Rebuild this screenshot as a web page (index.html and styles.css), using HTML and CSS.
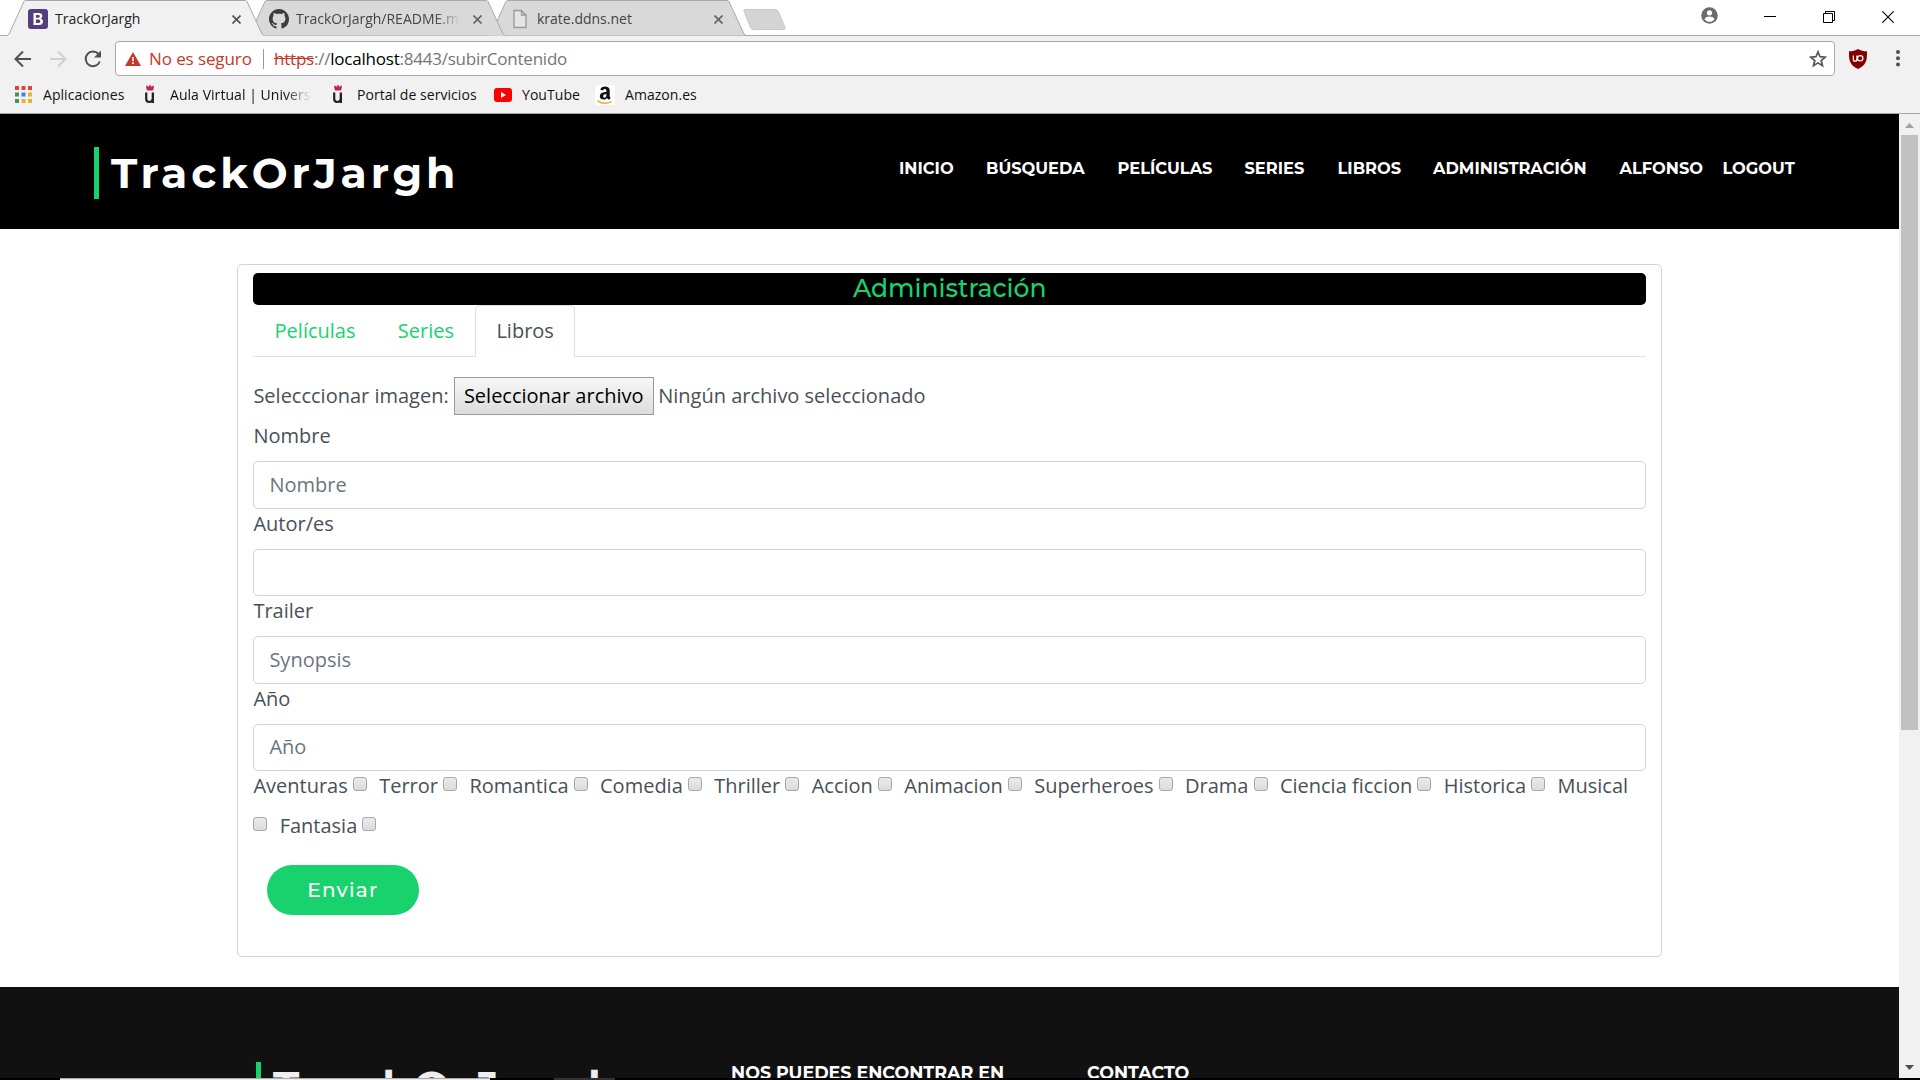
FILE: index.html
```html
<!DOCTYPE html>
<html lang="es">
<head>
<meta charset="utf-8">
<title>TrackOrJargh</title>
<link rel="stylesheet" href="styles.css">
</head>
<body>
<div class="browser">
  <div class="tabstrip">
    <div class="tab tab-active">
      <svg class="tab-shape" width="257" height="36" viewBox="0 0 257 36"><path d="M0 35.5 L2 34 L17 1.5 Q17.500 .5 19 .5 H238 Q239.500 .5 240 1.500 L255 34 L257 35.500 V36 H0Z" fill="#f1f1f1"/><path d="M0 35.500 L2 34 L17 1.500 Q17.500 .5 19 .5 H238 Q239.500 .5 240 1.500 L255 34 L257 35.500" fill="none" stroke="#a9a9a9"/></svg>
      <svg class="favicon" width="20" height="20" viewBox="0 0 20 20"><rect width="20" height="20" rx="3" fill="#563d7c"/><path d="M5.500 4h5.400c2.100 0 3.400 1 3.400 2.800 0 1.300-.7 2.200-1.800 2.600 1.600 .3 2.500 1.400 2.500 3 0 2.300-1.600 3.600-4 3.600H5.500z" fill="#fff"/><path d="M7.900 6v2.700h2.300c1.100 0 1.600-.5 1.600-1.400 0-.9-.5-1.300-1.600-1.300zM7.900 10.500V14h2.500c1.300 0 1.900-.6 1.900-1.700s-.6-1.800-1.900-1.800z" fill="#563d7c"/></svg>
      <span class="tab-title t1">TrackOrJargh</span>
      <svg class="close" width="9" height="9" viewBox="0 0 9 9"><path d="M.5 .5l8 8M8.500 .5l-8 8" stroke="#555" stroke-width="1.700"/></svg>
    </div>
    <div class="tab tab-second">
      <svg class="tab-shape" width="257" height="36" viewBox="0 0 257 36"><path d="M0 35.500 L2 34 L17 1.500 Q17.500 .5 19 .5 H238 Q239.500 .5 240 1.500 L255 34 L257 35.500" fill="#d9d9d9" stroke="#a9a9a9"/></svg>
      <svg class="favicon" width="20" height="20" viewBox="0 0 16 16"><path fill="#3c3c3c" d="M8 0C3.580 0 0 3.580 0 8c0 3.540 2.290 6.530 5.470 7.590.4.070.55-.17.55-.38 0-.19-.01-.82-.01-1.490-2.010.37-2.530-.49-2.690-.94-.09-.23-.48-.94-.82-1.130-.28-.15-.68-.52-.01-.53.630-.01 1.080.58 1.230.82.720 1.210 1.870.87 2.330.66.070-.52.280-.87.510-1.070-1.780-.2-3.640-.89-3.640-3.950 0-.87.310-1.590.82-2.150-.08-.2-.36-1.020.08-2.120 0 0 .67-.21 2.200.82.640-.18 1.320-.27 2-.27s1.360.09 2 .27c1.530-1.040 2.200-.82 2.200-.82.440 1.100.160 1.920.080 2.120.510.56.820 1.270.820 2.150 0 3.070-1.870 3.750-3.650 3.950.290.250.540.730.540 1.480 0 1.070-.01 1.930-.01 2.200 0 .21.150.46.550.38A8.010 8.010 0 0 0 16 8c0-4.420-3.580-8-8-8"/></svg>
      <span class="tab-title fade t2">TrackOrJargh/README.m</span>
      <svg class="close" width="9" height="9" viewBox="0 0 9 9"><path d="M.5 .5l8 8M8.500 .5l-8 8" stroke="#666" stroke-width="1.700"/></svg>
    </div>
    <div class="tab tab-third">
      <svg class="tab-shape" width="257" height="36" viewBox="0 0 257 36"><path d="M0 35.500 L2 34 L17 1.500 Q17.500 .5 19 .5 H238 Q239.500 .5 240 1.500 L255 34 L257 35.500" fill="#d9d9d9" stroke="#a9a9a9"/></svg>
      <svg class="favicon" width="20" height="20" viewBox="0 0 20 20"><path d="M4 1.500h7.500L16 6v12.500H4zM11.500 1.500V6H16" fill="#e4e4e4" stroke="#999" stroke-width="1.300"/></svg>
      <span class="tab-title t3">krate.ddns.net</span>
      <svg class="close" width="9" height="9" viewBox="0 0 9 9"><path d="M.5 .5l8 8M8.500 .5l-8 8" stroke="#666" stroke-width="1.700"/></svg>
    </div>
    <svg class="newtab" width="43" height="21" viewBox="0 0 43 21"><path d="M1.500 .5H32Q34.500 .5 35.500 2.500L42 18.500Q42.500 20.500 40.500 20.500H10.500Q8.500 20.500 7.500 18.500L1 2Q.5 .5 1.500 .5Z" fill="#d4d4d4" stroke="#c8c8c8"/></svg>
    <div class="window-buttons">
      <svg width="17" height="17" viewBox="0 0 17 17"><circle cx="8.500" cy="8.500" r="8.300" fill="#6b6b6b"/><circle cx="8.500" cy="5.800" r="2.600" fill="#fff"/><path d="M3.500 12.200c.8-2 3-2.700 5-2.700s4.200 .7 5 2.700c-1.200 1.700-3 2.600-5 2.600s-3.800-.9-5-2.600z" fill="#fff"/></svg>
      <svg width="12" height="12" viewBox="0 0 12 12"><path d="M0 5.500h12" stroke="#000"/></svg>
      <svg width="12" height="12" viewBox="0 0 12 12"><path d="M.5 2.500h9v9h-9zM2.500 2.500v-2h9v9h-2" fill="none" stroke="#000"/></svg>
      <svg width="12" height="12" viewBox="0 0 12 12"><path d="M.3 .3l11.400 11.400M11.700 .3L.3 11.700" stroke="#000" stroke-width="1.100"/></svg>
    </div>
  </div>
  <div class="toolbar">
    <svg class="nav-icon" width="100" height="20" viewBox="0 0 100 20"><path d="M17 10H2M9 2.500L1.500 10 9 17.500" fill="none" stroke="#505050" stroke-width="2"/><path d="M36 10h15M44 2.500l7.500 7.500-7.500 7.500" fill="none" stroke="#d0d0d0" stroke-width="2"/><path d="M84.500 5A7.300 7.300 0 1 0 85.800 12.500" fill="none" stroke="#505050" stroke-width="2"/><path d="M87 1.500v7h-7z" fill="#505050"/></svg>
    <div class="omnibox">
      <svg class="warn" width="16" height="14" viewBox="0 0 16 14"><path d="M8 0l8 14H0z" fill="#c53929"/><path d="M7.200 5h1.600v4.200H7.200zM7.200 10.300h1.600v1.600H7.200z" fill="#fff"/></svg>
      <span class="unsafe">No es seguro</span>
      <span class="divider"></span>
      <span class="url"><s>https</s>://<b>localhost</b>:8443/subirContenido</span>
      <svg class="star" width="18" height="18" viewBox="0 0 18 18"><path d="M9 1.800l2 4.900 5.200 .4-4 3.400 1.300 5.200L9 12.900l-4.500 2.800 1.300-5.200-4-3.400 5.200-.4z" fill="none" stroke="#555" stroke-width="1.700"/></svg>
    </div>
    <svg class="shield" width="18" height="20" viewBox="0 0 18 20"><path d="M9 0c2.500 1.700 5.500 2.200 9 2.300C18 9 18.500 15.500 9 20-.5 15.500 0 9 0 2.300 3.500 2.200 6.500 1.700 9 0z" fill="#800000"/><path d="M4.300 6.500v3.700q0 2 1.800 2t1.800-2V6.500M8.500 9.300a2.700 2.700 0 1 0 5.400 0 2.700 2.700 0 1 0-5.400 0" fill="none" stroke="#fff" stroke-width="1.200"/></svg>
    <svg class="dots" width="4" height="17" viewBox="0 0 4 17"><g fill="#505050"><circle cx="2" cy="2" r="2"/><circle cx="2" cy="8.300" r="2"/><circle cx="2" cy="14.600" r="2"/></g></svg>
  </div>
  <div class="bookmarks">
    <a class="bm bm-apps"><svg width="17" height="17" viewBox="0 0 17 17"><path d="M0 0h4v4H0zM6.500 0h4v4h-4zM13 0h4v4h-4z" fill="#e0443e"/><path d="M0 6.500h4v4H0zM0 13h4v4H0z" fill="#3a9b54"/><path d="M6.500 6.500h4v4h-4z" fill="#3e82f1"/><path d="M13 6.500h4v4h-4zM6.500 13h4v4h-4zM13 13h4v4h-4z" fill="#eeb02d"/></svg><span>Aplicaciones</span></a>
    <a class="bm bm-aula"><svg width="12" height="19" viewBox="0 0 12 19"><path d="M5.300 0h1.400v1.400h1.600V.8h1.500v2L9 5.500H3L2.200 2.800v-2h1.500v.6h1.600z" fill="#c8234a"/><path d="M2.200 7.500v6.300c0 2.400 1 3.200 3 3.200 2.300 0 3.600-1.400 3.600-3.500v-6M8.900 7.500V18" fill="none" stroke="#222" stroke-width="2.200"/></svg><span class="fade">Aula Virtual | Universi</span></a>
    <a class="bm bm-portal"><svg width="12" height="19" viewBox="0 0 12 19"><path d="M5.300 0h1.400v1.400h1.600V.8h1.500v2L9 5.500H3L2.200 2.800v-2h1.500v.6h1.600z" fill="#c8234a"/><path d="M2.200 7.500v6.300c0 2.400 1 3.200 3 3.200 2.300 0 3.600-1.400 3.600-3.500v-6M8.900 7.500V18" fill="none" stroke="#222" stroke-width="2.200"/></svg><span>Portal de servicios</span></a>
    <a class="bm bm-yt"><svg width="18" height="14" viewBox="0 0 18 14"><rect width="18" height="14" rx="3" fill="#f00"/><path d="M7 4l5 3-5 3z" fill="#fff"/></svg><span>YouTube</span></a>
    <a class="bm bm-amz"><svg width="20" height="20" viewBox="0 0 20 20"><rect width="20" height="20" rx="3" fill="#fff"/><path d="M5.300 5C5.800 2.400 7.600 1.500 10 1.500c3 0 4.700 1.300 4.700 4v4.900c0 1.300 .4 1.900 1.100 2.600l-2 1.800c-.8-.6-1.300-1.100-1.700-1.800-2.300 2.600-7.300 2.100-7.300-1.700 0-3.600 3.500-4.300 6.600-4.400 0-1.800-.1-3-1.500-3-1 0-1.500 .6-1.700 1.400zM11.400 9c-1.900 .1-3.200 .6-3.200 2.300 0 2.300 3.200 2 3.200-1.300z" fill="#111"/><path d="M2.500 15.800c4.500 3 9.700 3 14 .8" fill="none" stroke="#f5a623" stroke-width="1.500"/></svg><span>Amazon.es</span></a>
  </div>

  <div class="viewport">
    <div class="page">
      <header class="site-header">
        <h1 class="logo">TrackOrJargh</h1>
        <nav class="menu">
          <a class="m1">INICIO</a><a class="m2">BÚSQUEDA</a><a class="m3">PELÍCULAS</a><a class="m4">SERIES</a><a class="m5">LIBROS</a><a class="m6">ADMINISTRACIÓN</a><a class="m7">ALFONSO</a><a class="m8">LOGOUT</a>
        </nav>
      </header>
      <main class="card">
        <h2 class="card-title"><span>Administración</span></h2>
        <ul class="nav-tabs"><li>Películas</li><li>Series</li><li class="active">Libros</li></ul>
        <form class="form">
          <div class="file-row"><span>Selecccionar imagen:</span><button type="button" class="file-btn">Seleccionar archivo</button><span>Ningún archivo seleccionado</span></div>
          <label class="field">Nombre<input type="text" placeholder="Nombre"></label>
          <label class="field">Autor/es<input type="text"></label>
          <label class="field">Trailer<input type="text" placeholder="Synopsis"></label>
          <label class="field field-year">Año<input type="text" placeholder="Año"></label>
          <div class="genres">
            Aventuras <input type="checkbox"> Terror <input type="checkbox"> Romantica <input type="checkbox"> Comedia <input type="checkbox"> Thriller <input type="checkbox"> Accion <input type="checkbox"> Animacion <input type="checkbox"> Superheroes <input type="checkbox"> Drama <input type="checkbox"> Ciencia ficcion <input type="checkbox"> Historica <input type="checkbox"> Musical <input type="checkbox"> Fantasia <input type="checkbox">
          </div>
          <button type="button" class="send">Enviar</button>
        </form>
      </main>
      <footer class="site-footer">
        <h3 class="logo">TrackOrJargh</h3>
        <h4 class="f1">NOS PUEDES ENCONTRAR EN</h4>
        <h4 class="f2">CONTACTO</h4>
      </footer>
    </div>
    <div class="scrollbar">
      <svg width="9" height="5" viewBox="0 0 9 5"><path d="M0 5L4.500 0 9 5z" fill="#a3a3a3"/></svg>
      <div class="thumb"></div>
      <svg class="down" width="9" height="5" viewBox="0 0 9 5"><path d="M0 0L4.500 5 9 0z" fill="#505050"/></svg>
    </div>
  </div>
  <div class="taskbar-edge"><span class="edge-light"></span><span class="edge-dark"></span></div>
</div>
</body>
</html>
```
FILE: styles.css
```css
* { box-sizing: border-box; }
body { margin: 0; background: #fff; font-family: "Open Sans", "Noto Sans", sans-serif; overflow: hidden; }
h1, h2, h3, h4, ul { margin: 0; padding: 0; list-style: none; }
svg { display: block; flex: none; }

.browser { width: 1920px; height: 1080px; display: flex; flex-direction: column; overflow: hidden; }

/* tab strip */
.tabstrip { height: 36px; display: flex; padding-left: 7px; border-bottom: 1px solid #a9a9a9; flex: none; }
.tab { position: relative; width: 257px; height: 36px; margin-right: -16px; padding: 2px 23px 0 21px; display: flex; align-items: center; gap: 7px; flex: none; }
.tab > * { position: relative; }
.tab .tab-shape { position: absolute; left: 0; top: 0; }
.tab-active { z-index: 3; }
.tab-second { z-index: 2; }
.tab-third { z-index: 1; }
.tab-title { flex: 1; font-size: 14px; line-height: 20px; white-space: nowrap; color: #222; }
.tab-second .tab-title, .tab-third .tab-title { color: #444; }
.tab-title.t2 { flex: none; width: 165px; margin-right: auto; }
.fade { -webkit-mask-image: linear-gradient(90deg, #000 calc(100% - 26px), transparent); mask-image: linear-gradient(90deg, #000 calc(100% - 26px), transparent); }
.newtab { margin: 9px 0 0 13px; }
.window-buttons { margin-left: auto; padding: 0 26px 2px 0; display: flex; align-items: center; gap: 47px; }
.window-buttons svg:first-child { margin: -3px -1px 0 0; }

/* toolbar */
.toolbar { height: 41px; background: #f1f1f1; display: flex; align-items: center; padding: 4px 20px 0 14px; flex: none; }
.nav-icon { margin-right: 1px; }
.omnibox { width: 1720px; height: 35px; border: 1px solid #a9a9a9; border-radius: 4px; background: #fff; display: flex; align-items: center; padding: 0 7px 0 9px; font-size: 17px; line-height: 24px; }
.unsafe { color: #c53929; margin-left: 8px; width: 103px; letter-spacing: -.1px; white-space: nowrap; }
.divider { width: 1px; height: 20px; background: #999; margin: 0 10px 0 11px; }
.url { color: #757575; letter-spacing: -.22px; }
.url s { color: #c53929; }
.url b { color: #000; font-weight: 400; }
.star { margin-left: auto; }
.shield { margin-left: 14px; }
.dots { margin-left: auto; margin-right: 0; }

/* bookmarks */
.bookmarks { height: 37px; background: #f1f1f1; border-bottom: 1px solid #a9a9a9; display: flex; align-items: center; padding: 0 0 1px 15px; font-size: 14px; color: #111; letter-spacing: .05px; flex: none; }
.bm { display: flex; align-items: center; gap: 11px; white-space: nowrap; }
.bm-apps { width: 129px; }
.bm-aula { width: 188px; gap: 14px; }
.bm-aula span { width: 141px; }
.bm-portal { width: 162px; gap: 13px; }
.bm-yt { width: 101px; gap: 10px; }
.bm-amz { gap: 10px; }

/* viewport */
.viewport { height: 964px; display: flex; flex: none; overflow: hidden; }
.page { width: 1899px; overflow: hidden; }
.logo { font: 700 42.5px/52px Montserrat, Inter, sans-serif; color: #fff; border-left: 5px solid #18d26e; height: 52px; padding-left: 12px; letter-spacing: 3.85px; white-space: nowrap; }
.site-header { height: 115px; background: #000; padding: 33px 0 0 94px; display: flex; }
.site-header .logo { width: 805px; }
.menu { display: flex; height: 43px; align-items: center; font: 700 16.25px/21px Montserrat, Inter, sans-serif; color: #fff; white-space: nowrap; }
.m1 { width: 87px; } .m2 { width: 131.500px; } .m3 { width: 127px; } .m4 { width: 93px; }
.m5 { width: 95.500px; } .m6 { width: 186.500px; } .m7 { width: 103px; } .m8 { width: 80px; }

.card { width: 1425px; height: 693px; margin: 35px 0 30px 237px; border: 1px solid #ced4da; border-radius: 5px; padding: 8px 15px 8px 15.400px; color: #495057; font-size: 20px; line-height: 30px; }
.card-title { height: 32px; border-radius: 5px; background: #000; color: #18d26e; text-align: center; font: 500 25px/30px Montserrat, Inter, sans-serif; }
.nav-tabs { height: 52px; display: flex; border-bottom: 1px solid #dee2e6; color: #18d26e; }
.nav-tabs li { height: 52px; padding: 10px 20.200px; border: 1px solid transparent; }
.nav-tabs .active { background: #fff; color: #495057; border-color: #dee2e6 #dee2e6 #fff; border-radius: 5px 5px 0 0; }
.form { padding-top: 20px; }
.file-row { height: 44px; display: flex; align-items: flex-start; line-height: 38px; gap: 5px; }
.file-btn { width: 200px; height: 38px; margin-right: -.5px; padding: 0; font: 20px/34px "Open Sans", sans-serif; color: #000; border: 1px solid #999; border-radius: 0; background: linear-gradient(#f7f7f7, #dcdcdc); white-space: nowrap; }
.field { display: block; height: 87.5px; }
.field input { display: block; width: 100%; height: 47.5px; margin-top: 10px; padding: 0 15px; border: 1px solid #ced4da; border-radius: 5px; font: 20px/30px "Open Sans", sans-serif; color: #495057; }
.field-year input { padding-bottom: 1px; }
.field input::placeholder { color: #6c757d; opacity: 1; }
.genres { margin-top: -5px; line-height: 40px; }
.genres input { appearance: none; width: 14px; height: 14px; margin: 0 7.050px 0 0; vertical-align: 2px; border: 1px solid #a8a8a8; border-radius: 3px; background: linear-gradient(#e9e9e9, #dcdcdc); }
.send { display: block; width: 152px; height: 50px; margin: 19px 0 0 14px; border: 0; border-radius: 25px; background: #18d26e; color: #fff; font: 500 20px/50px Montserrat, Inter, sans-serif; letter-spacing: 1.25px; padding: 0 1px 0 0; }

.site-footer { height: 200px; background: #111; display: flex; padding: 75px 0 0 256px; }
.site-footer .logo { width: 475px; color: #eee; line-height: 48px; }
.site-footer h4 { font: 700 17.5px/20px Montserrat, Inter, sans-serif; color: #fff; padding-top: 1px; white-space: nowrap; }
.f1 { width: 356px; }

.scrollbar { width: 21px; background: #f1f1f1; display: flex; flex-direction: column; align-items: center; padding-top: 9px; }
.thumb { width: 17px; height: 595px; margin-top: 7px; background: #c1c1c1; }
.down { margin: auto 0 8px; }

.taskbar-edge { height: 2px; background: #000; display: flex; padding-left: 60px; }
.edge-light { width: 430px; background: #ededed; border-top: 1px solid #aaa; }
.edge-dark { width: 61px; margin-left: 64px; background: #333; }
```
